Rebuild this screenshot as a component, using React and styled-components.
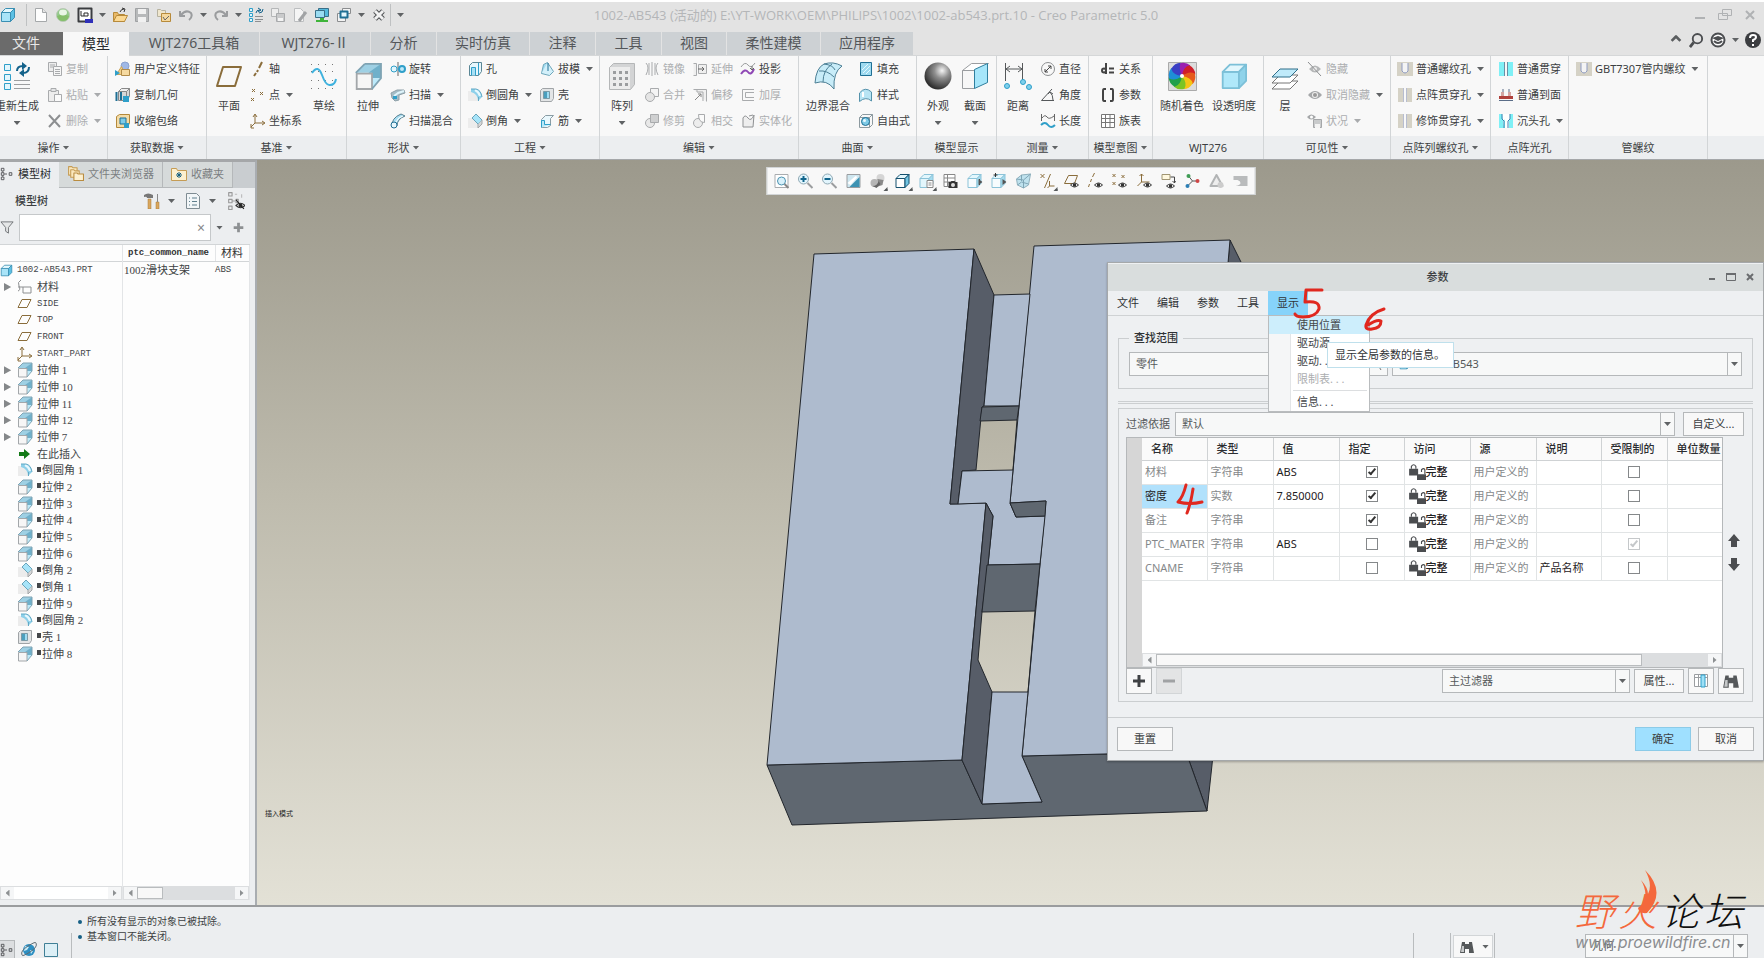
import React from 'react';
import styled, { createGlobalStyle } from 'styled-components';

const Global = createGlobalStyle`
  *, *::before, *::after { box-sizing: border-box; }
  body { margin: 0; font-family: "Noto Sans", "Noto Sans CJK SC", sans-serif; font-size: 11px; line-height: 16px; color: #3c3f42; background: #e3e3e3; }
  button, input, select { font: inherit; color: inherit; margin: 0; border-radius: 0; }
  button { background: none; border: 0; padding: 0; white-space: nowrap; }
  svg { display: block; flex: none; }
`;

/* ---------- icons ---------- */
const B = '#2f9fc9', L = '#bfe8f7', D = '#1f6f94', G = '#a9abad', LG = '#e4e5e6', T = '#8a6d3b', K = '#4a4c4f';

const cube = (s = '#3a8fb3', f = '#a9e4f8', f2 = '#5cc0e4') => (
  <g stroke={s} strokeLinejoin="round"><path d="M1.5 5.5h9v9h-9z" fill={f} /><path d="M1.5 5.5l4-4h9l-4 4z" fill="#e3f7fd" /><path d="M10.5 5.5l4-4v9l-4 4z" fill={f2} /></g>
);
const extrude = (
  <g>
    <path d="M1 6l5-5v5z" fill="#eef2f4" /><path d="M1 6l5-5h9l-5 5z" fill="#9ed0e4" /><path d="M8 6l7-5v8l-5 0V6z" fill="#6fb0ca" />
    <path d="M10 15l5-6h-5z" fill="#bdeafa" /><path d="M1.5 6.5H10V15H1.5z" fill="#f6f6f6" stroke="#a3a7aa" /><path d="M1 6l5-5M10 15l5-6V1H6" fill="none" stroke="#7fa3b3" />
  </g>
);
const eye = (x, y, c = '#333') => (
  <g transform={`translate(${x} ${y})`}><path d="M0 3Q4 -1 8 3Q4 7 0 3z" fill="#fff" stroke={c} /><circle cx="4" cy="3" r="1.800" fill={c} /></g>
);
const stroke = (d, c = K, w = 1, f = 'none') => <path d={d} stroke={c} strokeWidth={w} fill={f} strokeLinejoin="round" />;

const ICONS = {
  cube: cube(),
  page: <g>{stroke('M2.500 1.500h7l4 4v9h-11z', '#a5a8aa', 1, '#fdfdfd')}{stroke('M9.500 1.500v4h4', '#a5a8aa', 1, '#e6e6e6')}</g>,
  ball: <g><circle cx="8" cy="8" r="6.500" fill="#93c98a" stroke="#b9c9b6" /><path d="M2 9q6-3 12 0-1 5-6 5t-6-5z" fill="#86bf6c" /><ellipse cx="8" cy="5.500" rx="4" ry="3" fill="#e9f6e6" /></g>,
  session: <g>{stroke('M1.500 1.500h13v13h-13z', '#3b3d40', 2, '#fff')}{stroke('M4 4v5h7V6H7v3', '#2b2b2b', 1)}<path d="M8 12h8v4H8z" fill="#2f2fb8" /></g>,
  folder: <g>{stroke('M1.500 14.500v-9h4l1 2h6v7z', '#b78a3a', 1, '#e9b968')}{stroke('M1.500 14.500l3-6h11l-3 6z', '#b78a3a', 1, '#fbd892')}{stroke('M8 5q1-3 4-3M10 1l3 1-1 3', '#333', 1)}</g>,
  save: <g>{stroke('M1.500 1.500h13v13h-13z', '#a0a2a4', 1, '#b7b9ba')}<path d="M4 2h8v5H4zM4 10h8v5H4z" fill="#f1f1f1" /></g>,
  copyFolder: <g>{stroke('M1.500 9.500v-7h3l1 1h4v6z', '#b7b29f', 1, '#efe6cd')}{stroke('M5.500 14.500v-8h9v8z', '#b78a3a', 1, '#f4d79d')}{stroke('M7 10l2 3 4-4', '#666', 1)}</g>,
  undo: stroke('M2 4v5h5M3 8q5-6 10-2q2 4-2 7', '#9a9c9e', 2),
  redo: stroke('M14 4v5H9M13 8Q8 2 3 6q-2 4 2 7', '#9a9c9e', 2),
  regen: <g>{stroke('M1.500 1.500h3v3h-3zM1.500 6.500h3v3h-3zM1.500 11.500h3v3h-3z', B, 1, '#e2f6fd')}{stroke('M8 6q0-3 4-3M10 1l3 2-3 2M15 2q0 4-4 4', '#14628a', 1)}{stroke('M7 9.500h8M7 12.500h8M7 14.500h6', '#8d8f91', 1)}</g>,
  saveCopy: <g>{stroke('M1.500 1.500h7v8h-7z', '#b5b7b8', 1, '#ededed')}{stroke('M6.500 6.500h8v8h-8z', '#a8aaac', 1, '#c9cacb')}<path d="M8 11h5v3H8z" fill="#f4f4f4" /></g>,
  sheetEdit: <g>{stroke('M2.500 1.500h6l3 3v10h-9z', '#bcbec0', 1, '#f5f5f5')}{stroke('M14 5l-7 9', '#a1a3a5', 3)}</g>,
  monitor: <g>{stroke('M4.500 1.500h10v8h-10z', '#3a6f88', 1, '#55b9dc')}{stroke('M1.500 3.500h9v7h-9z', '#3a6f88', 1, '#9adcf2')}<path d="M6 11h4v2h4v2H2v-2h4z" fill="#3fb43a" /></g>,
  windows: <g>{stroke('M1.500 6.500h8v8h-8z', '#8b8d8f', 1, '#f3f3f3')}{stroke('M6.500 1.500h8v5h-8z', '#8b8d8f', 1, '#f3f3f3')}{stroke('M4.500 4.500h7v6h-7z', D, 2, '#e4f6fd')}</g>,
  closeDoc: <g>{stroke('M4 4l8 8M12 4l-8 8', '#4f5154', 5)}{stroke('M4 4l8 8M12 4l-8 8', '#f2f2f2', 3)}</g>,
  copy: <g>{stroke('M1.500 1.500h8v9h-8z', G, 1, '#ededed')}{stroke('M6.500 5.500h8v9h-8z', G, 1, '#f6f6f6')}{stroke('M3 4h5M3 6h3M8 8.500h5M8 10.500h5M8 12.500h5', G)}</g>,
  paste: <g>{stroke('M1.500 3.500h10v11h-10z', G, 1, '#ededed')}{stroke('M4 1.500h5v3H4z', G, 1, LG)}{stroke('M7.500 7.500h7v7h-7z', G, 1, '#fafafa')}</g>,
  del: stroke('M2 2l11 12M13 2L2 14', '#8d8f91', 2),
  udf: <g><circle cx="10" cy="5" r="4" fill="#9fb8e6" stroke="#8ba2d0" />{stroke('M1.500 13.500l5-8 4 8z', '#c9a257', 1, '#f3cf88')}{stroke('M6.500 8.500h8v6h-8z', '#b18b49', 1, '#f5d9a0')}<path d="M0 9l5 3-5 3z" fill={B} /></g>,
  copyGeom: <g>{stroke('M3.500 4.500l3-3h8l-3 3z', '#888', 1, '#f0f0f0')}{stroke('M3.500 4.500h8v9h-8zM11.500 4.500l3-3v8l-3 4', '#888', 1, '#d7d7d7')}<path d="M8 9h6v6H8z" fill={B} />{stroke('M1.500 5v9M6 5v8', D, 2)}</g>,
  shrink: <g>{stroke('M1.500 3.500l3-2h10v9l-3 4h-10z', '#b5893a', 1, '#f3dca8')}{stroke('M5 5h6v6H5z', D, 1, '#7dcbe8')}<path d="M9 10h5v5H9z" fill={B} /></g>,
  axis: stroke('M12 1L9 7M8 9l-1 2M6 12l-2 3', T, 2),
  points: stroke('M2 2l3 3M5 2L2 5M10 5l3 3M13 5l-3 3M1 11l3 3M4 11l-3 3', T, 1),
  csys: <g>{stroke('M5 2v8h9M5 10l-4 4', T, 1)}{stroke('M3 4l2-3 2 3M12 8l3 2-3 2M1 11v4h3', T, 1)}</g>,
  revolve: <g>{stroke('M8 1v14', '#666')}<circle cx="4" cy="8" r="3" fill="#e2f5fc" stroke={B} /><circle cx="12" cy="8" r="3" fill={L} stroke={B} strokeWidth="2" /></g>,
  sweep: <g><path d="M1 6l6-3h7l1 3-6 2v5l-4 1-3-3z" fill="#a4bcc6" stroke="#8fa0a8" />{stroke('M4 9l4-3 6-2', '#dff4fb', 2)}<path d="M3 9h4v3H3z" fill={B} /></g>,
  sweepBlend: <g><path d="M2 14Q1 5 11 1l4 2Q7 6 7 13z" fill="#a9def2" stroke="#567f90" /><circle cx="4" cy="12" r="3" fill="#e7f6fc" stroke={D} />{stroke('M6 9Q8 4 13 3', '#fff', 1)}</g>,
  hole: <g>{stroke('M2.500 4.500l3-3h9v9l-3 4h-9z', '#5b8796', 1, '#e7f6fc')}{stroke('M4.500 14.500V6.500h4v8M11.500 2v12', B, 1, '#a9e0f4')}</g>,
  round: <g><path d="M1 4h7l4 5v5H1z" fill="#ececec" /><path d="M4 2h5q5 1 6 8l-4 4q0-7-7-9z" fill="#8dd0ea" /><path d="M8 3q4 2 5 6" stroke="#e7f8fe" strokeWidth="2" fill="none" />{stroke('M11.500 14v-4M4 2h5q5 1 6 8', '#62a9c5')}</g>,
  chamfer: <g><path d="M1 5h6l5 5v5H1z" fill="#ececec" /><path d="M5 5l4-4 6 6-4 4z" fill="#a7e4f9" stroke="#6aa5bb" />{stroke('M11 11v4l4-4V7', '#a3a6a8', 1, '#d5d7d8')}</g>,
  draft: <g>{stroke('M2.500 12.500L4.500 3.500l4-2v11z', '#6fa7bb', 1, '#a3ddf2')}{stroke('M8.500 1.500l6 9-4 4-8-2', '#6fa7bb', 1, '#d3f0fa')}{stroke('M9 2v8', D)}</g>,
  shell: <g>{stroke('M1.500 3.500l2-2h11v10l-2 3h-11z', '#a0a4a7', 1, '#e3e5e6')}{stroke('M4.500 4.500h6v7h-6z', '#7b9aa6', 1, '#4c9fbd')}<path d="M8 5h2v6H8z" fill="#9fdcf2" /></g>,
  rib: <g>{stroke('M2.500 6.500l4-4h8l-3 3v7l-3 2h-6z', '#8a9ca4', 1, '#e9f7fc')}{stroke('M2.500 14.500V7.500h3v4h6', B, 1, '#b8e8f8')}</g>,
  mirror: stroke('M8 1v14M2 2q4 4 0 12M5 2v12M14 2q-4 4 0 12M11 2v12', G),
  extend: <g>{stroke('M1.500 2.500h3v12h-3M6.500 3.500h8v9h-8z', G, 1, '#efefef')}{stroke('M6 8h6M10 6l2 2-2 2', '#666')}</g>,
  project: <g>{stroke('M1 6q4-6 7-2t7-2', '#9a9c9e', 1)}{stroke('M1 13q4-6 7-2t6-3', '#8f48b5', 2)}{stroke('M12 5v4M10 7l2 2 2-2', '#666')}</g>,
  merge: <g>{stroke('M6.500 1.500h8v8h-8z', G, 1, '#f4f4f4')}<circle cx="6" cy="10" r="4.500" fill="#e5e5e5" stroke={G} /></g>,
  offset: <g>{stroke('M1.500 2.500h13v12M5 2v3h6v9', G, 1, '#efefef')}{stroke('M3 13l6-6M6 7h3v3', '#888', 1)}</g>,
  thicken: stroke('M14 2.500H2.500v11H14M14 5.500H5.500v5H14', G),
  trim: <g><circle cx="6" cy="10" r="4.500" fill="#e8e8e8" stroke={G} />{stroke('M6.500 1.500h8v8h-8z', G, 1, '#cfd0d1')}</g>,
  intersect: <g><circle cx="6" cy="10" r="4.500" fill="#ededed" stroke={G} />{stroke('M6.500 1.500h6v8q-6 0-6-8z', G, 1, '#fafafa')}</g>,
  solidify: stroke('M3 14V5q2-4 5 0t6-3l-1 12H3M13 2l-4 1', '#8f9193', 1, '#eee'),
  fill: <g>{stroke('M2.500 1.500h11v13h-11z', D, 1, '#9edaf0')}{stroke('M4 9l6-6M5 12l7-7M8 13l4-4', '#e5f8ff')}</g>,
  style: <g>{stroke('M1.500 14.500V6Q7-1 13.500 5v9Q8 9 1.500 14.500z', '#5592ab', 1, '#b7e4f4')}{stroke('M5 5v5', '#fff', 2)}</g>,
  freestyle: <g>{stroke('M1.500 4.500l3-3h10v10l-3 3h-10zM1.500 4.500h10v10M11.500 4.500l3-3', '#8d9aa0', 1)}<circle cx="7.500" cy="8.500" r="4" fill="#7fcbe7" stroke={D} /><circle cx="6.500" cy="7.500" r="1.500" fill="#e9f9ff" /></g>,
  diameter: <g><circle cx="8" cy="8" r="6.500" fill="none" stroke="#8e9092" />{stroke('M5 11l6-6M8 5h3v3M5 8v3h3', '#444')}</g>,
  angle: stroke('M14 13.500H1.500L12 2M10 5q3 3 3 8M8 7l2-2 3 2', '#55585a'),
  length: <g>{stroke('M1.500 1v7M14.500 1v7M2 5q3-4 5-1t7-1', '#666')}{stroke('M1 12q4-4 7 0t7 0', B, 2)}</g>,
  relation: <g>{stroke('M6 2v11M6 9.500a2 2 0 1 0-4 0a2 2 0 1 0 4 0', '#444', 2)}{stroke('M9 7.500h5M9 11.500h5', '#444', 2)}</g>,
  param: stroke('M6 2H4q-1 0-1 2v8q0 2 1 2h2M10 2h2q1 0 1 2v8q0 2-1 2h-2', '#444', 2),
  family: <g>{stroke('M1.500 1.500h13v13h-13zM1.500 5.500h13M1.500 9.500h13M5.500 1.500v13M10 1.500v13', '#777', 1, '#fff')}</g>,
  hide: <g><path d="M2 8q6-7 12 0q-6 7-12 0z" fill="#b5b7b8" /><circle cx="8" cy="8" r="2" fill="#eee" />{stroke('M1 1l13 14', '#8c8e90')}</g>,
  unhide: <g><path d="M1 8q7-8 14 0q-7 8-14 0z" fill="#a5a7a9" /><circle cx="8" cy="8" r="3" fill="#eee" /><circle cx="8" cy="8" r="2" fill="#999" /></g>,
  status: <g><path d="M0 4q4-5 9 0q-5 5-9 0z" fill="#a5a7a9" /><circle cx="4.500" cy="4" r="1.500" fill="#fff" />{stroke('M6.500 6.500h8v8h-8z', '#a5a7a9', 1, '#c9cbcc')}<path d="M8 11h5v4H8z" fill="#f4f4f4" /></g>,
  uhole: <g><path d="M0 1h16v14H0z" fill="#d5d2c6" />{stroke('M5 2v8q3 4 6 0V2', '#8f9bc0', 1, '#f4f4f4')}</g>,
  through: <g><path d="M1 1h5v14H1zM10 1h5v14h-5z" fill="#d5d2c6" />{stroke('M6.500 1v14M9.500 1v14', '#b7bdd0')}</g>,
  cyanThrough: <g><path d="M1 1h5v14H1zM10 1h5v14h-5z" fill="#7ff0f6" />{stroke('M6.500 1v14M9.500 1v14', '#6a8fa5')}</g>,
  toFace: <g><path d="M1 9h14v3H1z" fill="#b0413c" />{stroke('M5 2v7M11 2v7M1 13.500h14', '#5a6d88')}<path d="M3 5h3v4H3zM10 5h3v4h-3z" fill="#d3a6a3" /></g>,
  sink: <g><path d="M1 1h14v14H1z" fill="#7ff0f6" /><path d="M4 1h3v5l-1 2v7M9 1h3v5l-1 2v7H9z" fill="#fff" />{stroke('M4 1v5l2 2v7M12 1v5l-2 2v7', '#3c7fae')}<path d="M7 1h2v14H7z" fill="#fff" /></g>,
  modelTree: stroke('M1.500 1.500h3v3h-3zM1.500 6.500h3v3h-3zM1.500 11.500h3v3h-3zM5 8h3M10.500 6.500h3v3h-3zM3 5v1M3 10v1', '#4b4d50'),
  folders: <g>{stroke('M1.500 9.500v-8h3l1 1h4v7z', '#c59c55', 1, '#fbe8bd')}{stroke('M3.500 11.500v-7h3l1 1h4v6z', '#c59c55', 1, '#fbe8bd')}{stroke('M6.500 14.500v-7h3l1 1h5v6z', '#b98c40', 1, '#fdf0cf')}</g>,
  fav: <g>{stroke('M.500 14.500v-12h5l1 2h9v10z', '#c59c55', 1, '#fdf0cf')}{stroke('M8 6v6M5 9h6M6 7l4 4M10 7l-4 4', '#155e80')}</g>,
  tools: <g><path d="M4 6h3v10H4zM12 9h3v7h-3z" fill="#d9a75e" stroke="#a87b3a" strokeWidth=".500" /><path d="M0 2q4-3 9 0v3H3q0-2-3-1z" fill="#777" />{stroke('M13.500 1v8', '#888', 1)}</g>,
  listDoc: <g>{stroke('M1.500.500h10l3 3v12h-13z', '#7f8c93', 1, '#f2f6f8')}{stroke('M4 5h1M4 8.500h1M4 12h1M7 5h5M7 8.500h5M7 12h5', '#5f7f8d')}</g>,
  treeHide: <g>{stroke('M1.500.500h3v3h-3zM1.500 6.500h3v3h-3zM1.500 12.500h3v3h-3zM5 8h2M8 6.500h2v3H8z', '#999')}{stroke('M13 2v3M7 2h2', '#bbb')}{eye(8, 9)}{stroke('M8 7l7 8', '#222')}</g>,
  filter: stroke('M1 2h13L9 8v6l-3-2V8z', '#707376', 1, '#e5e7e8'),
  material: stroke('M4 1q-4 2-2 6t-1 5M1 8l5 0v6h8V8H6', '#8d8f91'),
  plane: stroke('M5 3.500h9l-4 8H1z', T),
  insert: <path d="M2 6h5V3l6 5-6 5v-3H2z" fill="#137a17" />,
  extrude,
  fit: <g>{stroke('M1.500 1.500h13v13h-13z', '#a9acaf', 1, '#fff')}<circle cx="8" cy="8" r="4" fill="#d8f1fb" stroke="#4d93b0" />{stroke('M11 11l4 4', '#888', 2)}</g>,
  zoomIn: <g><circle cx="6" cy="6" r="5" fill="#e2f5fd" stroke="#8fa8b3" />{stroke('M3 6h6M6 3v6', '#11658c', 2)}{stroke('M10 10l5 5', '#9b9d9f', 2)}</g>,
  zoomOut: <g><circle cx="6" cy="6" r="5" fill="#e2f5fd" stroke="#8fa8b3" />{stroke('M3 6h6', '#11658c', 2)}{stroke('M10 10l5 5', '#9b9d9f', 2)}</g>,
  repaint: <g>{stroke('M1.500 1.500h13v13h-13z', '#9a9da0', 1, '#cfe7f0')}<path d="M4 14L14 4v10z" fill="#3d93b3" /><path d="M2 10l8-7 2 1-7 8z" fill="#fff" /></g>,
  shade: <g><circle cx="11" cy="5" r="4" fill="#d5d5d5" /><path d="M8 6l6 1-1 5-6 2z" fill="#8a8a8a" /><circle cx="5" cy="10" r="4" fill="#b5b5b5" /><path d="M3 13q5 0 6-5l2 3-4 4z" fill="#666" /></g>,
  cubeDark: cube('#14506e', '#fff', '#73c5e3'),
  cubeList: <g>{cube('#8cc3d8', '#e3f6fc', '#a5dcef')}{stroke('M8.500 7.500h6v7h-6zM10 10h3M10 12h3', '#888', 1, '#fff')}</g>,
  camera: <g>{stroke('M1.500 1.500h11v12h-11zM1.500 5h11M1.500 9h11M5 1.500v12', '#888', 1, '#fff')}<path d="M6 9h2l1-1h3l1 1h2v6H6z" fill="#333" /><circle cx="10.500" cy="12" r="2" fill="#ddd" /></g>,
  section: <g>{cube('#8cc3d8', '#f7fcfe', '#a5dcef')}{stroke('M13 6v6', '#444', 1)}<path d="M12 6l4 3-4 3z" fill="#555" /></g>,
  explode: <g>{cube('#8cc3d8', '#f7fcfe', '#a5dcef')}{stroke('M5 0v4M3 2h4', '#333')}<path d="M12 6l4 3-4 3z" fill="#555" /></g>,
  persp: <g>{stroke('M1 6l5-4 9-1-2 11-5 3-6-3z', '#8fb0bd', 1, '#bfe2ee')}{stroke('M1 6l7 1 7-6M8 7v8M6 2v6M2 12l4-3 7 2', '#7fa6b6')}</g>,
  datumAll: stroke('M1 1l4 4M5 1L1 5M11 1L5 15M10 8v5h5M10 13l-2 2', T),
  planeEye: <g>{stroke('M5 2.500h9l-3 8H1z', T)}{eye(7, 9)}</g>,
  axisEye: <g>{stroke('M7 0L5 4M4 6L3 9M2 11l-1 3', T)}{eye(7, 9)}</g>,
  ptsEye: <g>{stroke('M1 1l3 3M4 1L1 4M10 2l3 3M13 2l-3 3M1 9l3 3M4 9l-3 3', T)}{eye(7, 9)}</g>,
  csysEye: <g>{stroke('M5 1v8h8M5 9l-4 4M3 3l2-2 2 2', T)}{eye(7, 9)}</g>,
  annoEye: <g>{stroke('M1.500 1.500h8v5h-8z', '#a09573', 1, '#fff8df')}{stroke('M10 4h4v6M12 8l2 2 1-2', '#444')}{eye(6, 10)}</g>,
  spin: <g>{stroke('M8 8L4 3M8 8H14M8 8l-5 5', '#555')}<circle cx="4" cy="3" r="2" fill="#3f9d55" /><circle cx="13" cy="8" r="2" fill="#cf4646" /><circle cx="3" cy="13" r="2" fill="#2d7fb5" /></g>,
  tri: <g>{stroke('M8 2L2 13h12z', '#b2b4b5', 2, '#ededed')}<circle cx="12" cy="12" r="3" fill="#ccc" /></g>,
  flag: <path d="M1 3h14v10H3q5-1 5-3t-3-3H1z" fill="#b9bbbc" />,
  globe: <g><circle cx="8" cy="8" r="6" fill="#2d8fc2" /><path d="M4 4l4 1-2 3-3 1zM9 8l3 1-2 3z" fill="#c7ecfa" />{stroke('M1 13Q-1 9 7 4t8-3q2 4-6 9t-8 3', '#5f6c74')}</g>,
  square: stroke('M1.500 1.500h13v13h-13z', '#3f7f96', 1, '#dceff6'),
  binoc: <g><path d="M3 3h3v2h4V3h3l2 11h-5v-4H6v4H1z" fill="#55585a" /><path d="M3 7h2v6H2z" fill="#c7c9ca" /></g>,
  colTable: <g>{stroke('M1.500 1.500h13v12h-13zM1.500 4.500h13M5.500 1.500v12M10.500 1.500v12', '#9a9da0', 1, '#fff')}<path d="M8 2h4v12H8z" fill="#9fe0f6" stroke={B} /></g>,
  plus: stroke('M8 2v12M2 8h12', '#3f4144', 3),
  plusDim: stroke('M8 1v14M1 8h14', '#8d9092', 4),
  minus: stroke('M2 8h12', '#a0a2a4', 3),
  up: <path d="M8 1l6 7h-3v6H5V8H2z" fill="#4b4d50" />,
  down: <path d="M8 15l6-7h-3V2H5v6H2z" fill="#4b4d50" />,
  search: <g><circle cx="9" cy="6" r="5" fill="none" stroke="#4b4d50" strokeWidth="2" />{stroke('M5 10l-4 5', '#4b4d50', 3)}</g>,
  learn: <g><circle cx="8" cy="8" r="6.500" fill="#fff" stroke="#4b4d50" strokeWidth="2" /><path d="M2 6l6-2 6 2-6 3z" fill="#4b4d50" />{stroke('M4 9q4 4 8 0', '#4b4d50', 2)}</g>,
  help: <g><circle cx="8" cy="8" r="8" fill="#3b3d40" />{stroke('M5 6q0-3 3-3t3 2q0 2-3 3v2M8 12v2', '#fff', 2)}</g>,
  collapse: stroke('M3 9l5-5 5 5', '#5b5e60', 3),
  winMin: stroke('M3 11h10', '#b0b2b4', 2),
  winRestore: stroke('M5.500 2.500h9v6h-9zM1.500 6.500h9v6h-9z', '#b0b2b4', 1, '#e3e3e3'),
  winClose: stroke('M4 4l8 8M12 4l-8 8', '#b0b2b4', 2),
  dlgMin: stroke('M5 10h6', '#6a6c6f', 2),
  dlgMax: <g>{stroke('M3.500 4.500h9v7h-9z', '#6a6c6f')}{stroke('M3 5h10', '#6a6c6f', 2)}</g>,
  dlgClose: stroke('M5 5l6 6M11 5l-6 6', '#6a6c6f', 2),
  picker: stroke('M4 1v11l3-3 3 5M4 1l8 8H7', '#777'),
  locks: <g><path d="M1 5h8v6H1zM8 10h8v5H8z" fill="#4b4d50" />{stroke('M3 5V3q2-3 4 0v2', '#4b4d50', 1)}{stroke('M12 8V6q2-2 3 0v4', '#4b4d50', 1)}</g>,
};

const Icon = ({ n, s = 16 }) => <svg width={s} height={s} viewBox="0 0 16 16" aria-hidden="true">{ICONS[n]}</svg>;

const petals = ['#9a1fb0', '#d01f2a', '#e65a1c', '#f5c515', '#7cc423', '#1fa04a', '#1e8fd6', '#3a3fc4'];
const BIG = {
  regen: <g><g stroke={B} fill="#e2f6fd"><path d="M1.500 2.500h6v6h-6zM1.500 12.500h6v6h-6zM1.500 21.500h6v6h-6z" /></g>{stroke('M14 9q0-5 6-5M26 5q0 6-6 6', '#14628a', 2)}<path d="M19 0l5 4-5 4zM21 7l-5 4 5 4z" fill="#14628a" />{stroke('M11 18.500h16M11 22.500h16M11 26.500h16', '#9c9ea0')}</g>,
  plane: stroke('M8 5h18l-6 19H2z', T, 2),
  sketch: <g><path d="M1 2.500h26M1 9.500h26M1 18.500h26M1 26.500h26" stroke="#777" strokeDasharray="1 6" />{stroke('M2 11q6-9 10 2t8 10q5 0 6-6', '#3fb2de', 2)}</g>,
  extrude: <g transform="scale(1.800)">{extrude}</g>,
  pattern: <g>{stroke('M1.500 5.500l4-4h21v21l-4 5h-21z', '#b5b7b8', 1, '#d3d4d5')}<path d="M2 5h20v22H2z" fill="#ececec" /><path d="M5 9h3v3H5zM11 9h3v3h-3zM17 9h3v3h-3zM5 15h3v3H5zM11 15h3v3h-3zM17 15h3v3h-3zM5 21h3v3H5zM11 21h3v3h-3zM17 21h3v3h-3z" fill="#9b9d9f" /></g>,
  blend: <g>{stroke('M1 21Q2 6 10 2q9-3 18 2-9 6-8 23Q13 17 1 21z', '#4c7f95', 1, '#c8ecf8')}{stroke('M10 2q9 1 11 6M5 9q8-1 15 6M9 20Q9 8 18 2', '#4c7f95')}</g>,
  sphere: <circle cx="14" cy="14" r="13.500" fill="url(#ball)" />,
  cut: <g>{stroke('M1.500 8.500l9-7h17l-13 7z', '#9a9da0', 1, '#fff')}{stroke('M1.500 8.500h12v18h-12z', '#9a9da0', 1, '#f7f7f7')}{stroke('M13.500 26.500v-19l13-6v19z', '#2f7f9e', 1, '#a6e6fa')}</g>,
  distance: <g>{stroke('M1.500 1v18M18.500 1v18M2 7h16M6 4L2 7l4 3M14 4l4 3-4 3', '#55585a')}<g fill="#7fd0ec" stroke={B}><circle cx="3" cy="24" r="2.500" /><circle cx="19" cy="20" r="2.500" /><circle cx="25" cy="25" r="2.500" /></g></g>,
  color: <g><path d="M.5.5h28v28H.5z" fill="#dcdddd" stroke="#aaa" />{petals.map((c, i) => <path key={c} d="M14 14Q7 8 9 2Q15 -1 20 2Q15 6 14 14z" fill={c} transform={`rotate(${i * 45 + 12} 14 14)`} />)}<circle cx="14" cy="14" r="2" fill="#fff" /></g>,
  clear: <g transform="scale(1.800)">{cube('#7cc0d8', '#b0e8fa', '#8fd3ea')}</g>,
  layers: <g>{stroke('M1 27l8-8h18l-8 8z', '#777', 1, '#fff')}{stroke('M1 21l8-8h18l-8 8z', '#777', 1, '#fff')}{stroke('M1 15l8-8h18l-8 8z', '#2f6f8a', 1, '#bfeafa')}</g>,
};
const BigIcon = ({ n }) => <svg width="29" height="29" viewBox="0 0 29 29" aria-hidden="true">{BIG[n]}</svg>;

const Arrow = styled.span`
  flex: none; width: 7px; height: 4px; background: ${p => (p.$dim ? '#a9abad' : '#606365')}; clip-path: polygon(0 0, 100% 0, 50% 100%);
`;

/* ---------- shell ---------- */
const Shell = styled.div`position: relative; display: flex; flex-direction: column; min-height: 100vh; overflow: hidden;`;

const TitleBar = styled.header`
  display: grid; grid-template-columns: 1fr auto 1fr; align-items: center; height: 32px;
  padding: 0 6px 4px 0; border-top: 2px solid #fff; background: #e3e3e3;
`;
const QuickBar = styled.div`display: flex; align-items: center;`;
const QuickButton = styled.button`display: grid; place-items: center; width: ${p => (p.$arrow ? 13 : p.$app ? 16 : 22)}px; height: 22px;`;
const QuickRule = styled.span`width: 1px; height: 22px; margin: 0 3px 0 ${p => (p.$first ? 10 : 0)}px; background: #bfc1c2;`;
const WindowTitle = styled.h1`margin: 0 6px 0 0; font: 400 13px/20px "Open Sans", "Noto Sans CJK SC", sans-serif; color: #b4b6b8; white-space: nowrap;`;
const WindowButtons = styled.div`display: flex; justify-content: flex-end; gap: 9px;`;

const TabBar = styled.nav`display: flex; height: 24px; background: #e3e3e3; border-bottom: 1px solid #d5d7d8;`;
const Tab = styled.button`
  width: ${p => p.$w}px; margin-right: ${p => (p.$kind ? 0 : 1)}px; padding: 0 ${p => (p.$kind === 'file' ? 11 : 0)}px 1px 0; font-size: 14px; line-height: 22px;
  color: ${p => (p.$kind === 'file' ? '#e8e8e8' : p.$kind === 'on' ? '#2b2d30' : '#54575a')};
  background: ${p => (p.$kind === 'file' ? '#6b6b6b' : p.$kind === 'on' ? '#f8f8f8' : '#cdd1d4')};
  ${p => p.$kind === 'on' && 'height: 24px;'}
`;
const TabTools = styled.div`display: flex; align-items: center; gap: 6px; margin-left: auto; padding: 0 3px 8px 0; height: 24px;`;

const Ribbon = styled.div`display: flex; height: 104px; background: #f8f8f8; border-bottom: 1px solid #a5a7a9; overflow: hidden;`;
const Group = styled.section`flex: none; display: flex; flex-direction: column; width: ${p => p.$w}px; border-right: 1px solid #d2d5d7;`;
const GroupBody = styled.div`flex: 1; display: flex;`;
const GroupLabel = styled.footer`display: flex; align-items: center; justify-content: center; gap: 3px; height: 23px; background: #eceef0; white-space: nowrap;`;
const LabelFill = styled.div`flex: 1; background: linear-gradient(#f8f8f8 80px, #eceef0 80px);`;
const BigButton = styled.button`
  flex: none; display: flex; flex-direction: column; align-items: center; width: ${p => p.$w}px; margin-left: ${p => p.$ml}px; padding-top: 6px;
  & > span:nth-of-type(1) { margin: 7px 0; }
`;
const Column = styled.div`flex: none; width: ${p => p.$w}px; margin-left: ${p => p.$ml}px;`;
const Command = styled.button`
  display: flex; align-items: center; gap: 3px; height: 26px; color: ${p => (p.$dim ? '#acaeb0' : '#3c3f42')};
  ${Arrow} { margin-left: 3px; }
`;

const big = (icon, text, w, ml = 0, arrow) => ({ big: icon, text, w, ml, arrow });
const col = (w, ml, ...items) => ({ w, ml, items });
/* command: [icon, text, flags] where d = unavailable, a = has a drop-down, s = the arrow stays available */
const GROUPS = [
  { w: 108, label: '操作', arrow: 1, cols: [big('regen', '重新生成', 44, -5, 1), col(60, 8, ['copy', '复制', 'd'], ['paste', '粘贴', 'da'], ['del', '删除', 'da'])] },
  { w: 99, label: '获取数据', arrow: 1, cols: [col(90, 7, ['udf', '用户定义特征', ''], ['copyGeom', '复制几何', ''], ['shrink', '收缩包络', ''])] },
  { w: 140, label: '基准', arrow: 1, cols: [big('plane', '平面', 36, 4), col(56, 3, ['axis', '轴', ''], ['points', '点', 'a'], ['csys', '坐标系', '']), big('sketch', '草绘', 36)] },
  { w: 114, label: '形状', arrow: 1, cols: [big('extrude', '拉伸', 36, 3), col(70, 4, ['revolve', '旋转', ''], ['sweep', '扫描', 'a'], ['sweepBlend', '扫描混合', ''])] },
  { w: 139, label: '工程', arrow: 1, cols: [col(72, 6, ['hole', '孔', ''], ['round', '倒圆角', 'a'], ['chamfer', '倒角', 'a']), col(60, 0, ['draft', '拔模', 'a'], ['shell', '壳', ''], ['rib', '筋', 'a'])] },
  { w: 199, label: '编辑', arrow: 1, cols: [big('pattern', '阵列', 36, 4, 1), col(48, 4, ['mirror', '镜像', 'd'], ['merge', '合并', 'd'], ['trim', '修剪', 'd']), col(48, 0, ['extend', '延伸', 'd'], ['offset', '偏移', 'd'], ['intersect', '相交', 'd']), col(58, 0, ['project', '投影', ''], ['thicken', '加厚', 'd'], ['solidify', '实体化', 'd'])] },
  { w: 118, label: '曲面', arrow: 1, cols: [big('blend', '边界混合', 48, 5), col(60, 6, ['fill', '填充', ''], ['style', '样式', ''], ['freestyle', '自由式', ''])] },
  { w: 80, label: '模型显示', cols: [big('sphere', '外观', 36, 3, 1), big('cut', '截面', 36, 1, 1)] },
  { w: 92, label: '测量', arrow: 1, cols: [big('distance', '距离', 36, 3), col(50, 4, ['diameter', '直径', ''], ['angle', '角度', ''], ['length', '长度', ''])] },
  { w: 64, label: '模型意图', arrow: 1, cols: [col(50, 11, ['relation', '关系', ''], ['param', '参数', ''], ['family', '族表', ''])] },
  { w: 111, label: 'WJT276', cols: [big('color', '随机着色', 48, 5), big('clear', '设透明度', 48, 4)] },
  { w: 127, label: '可见性', arrow: 1, cols: [big('layers', '层', 36, 3), col(80, 4, ['hide', '隐藏', 'd'], ['unhide', '取消隐藏', 'das'], ['status', '状况', 'da'])] },
  { w: 100, label: '点阵列螺纹孔', arrow: 1, cols: [col(92, 6, ['uhole', '普通螺纹孔', 'a'], ['through', '点阵贯穿孔', 'a'], ['through', '修饰贯穿孔', 'a'])] },
  { w: 78, label: '点阵光孔', cols: [col(68, 7, ['cyanThrough', '普通贯穿', ''], ['toFace', '普通到面', ''], ['sink', '沉头孔', 'a'])] },
  { w: 139, label: '管螺纹', cols: [col(130, 7, ['uhole', 'GBT7307管内螺纹', 'a'])] },
];

const Main = styled.main`flex: 1; display: flex; min-height: 745px;`;

/* ---------- model tree ---------- */
const Side = styled.aside`
  flex: none; display: flex; flex-direction: column; width: 257px; padding-bottom: 5px; background: #eceef0;
  border-top: 2px solid #a5a7a9; border-right: 2px solid #a9adb1;
`;
const SideTabs = styled.div`display: flex; height: 26px; background: #c9cdd0;`;
const SideTab = styled.button`
  display: flex; align-items: center; gap: 4px; width: ${p => p.$w}px; padding: 0 0 2px ${p => p.$pl}px;
  color: ${p => (p.$on ? '#2b2d30' : '#7b7e81')}; background: ${p => (p.$on ? '#eceef0' : '#d6dada')};
  border: solid #b5b8ba; border-width: ${p => (p.$on ? '0' : '0 1px 1px 0')};
`;
const SideHead = styled.div`display: flex; align-items: center; height: 26px; padding: 0 10px 0 15px; h2 { flex: 1; margin: 0; font-size: 11px; font-weight: 500; } svg { margin: 0 8px 0 10px; } svg:last-child { margin: 0 0 0 11px; }`;
const SearchRow = styled.div`display: flex; align-items: center; height: 27px; padding-right: 11px; ${Arrow} { margin: 0 10px 0 5px; }`;
const SearchBox = styled.div`
  flex: 1; display: flex; align-items: center; height: 27px; margin-left: 4px; background: #fff; border: 1px solid #c5c8ca;
  input { flex: 1; min-width: 0; border: 0; background: none; outline: 0; } button { width: 18px; color: #85888a; font-size: 14px; }
`;
const TreeFrame = styled.div`flex: 1; display: grid; grid-template-columns: 123px 1fr; margin: 3px 5px 0 0; background: #fdfdfd; border-top: 1px solid #d2d5d7;`;
const TreeCol = styled.div`display: flex; flex-direction: column; border-right: 1px solid #e3e5e7; min-width: 0;`;
const TreeHeadCell = styled.div`
  display: flex; flex: none; height: 17px; border-bottom: 1px solid #d2d5d7; color: #333; align-items: center;
  span { overflow: hidden; white-space: nowrap; }
  span:first-child { width: 93px; padding-left: 5px; border-right: 1px solid #e3e5e7; font: bold 9px/16px "Liberation Mono", monospace; }
  span:last-child { padding-left: 5px; }
`;
const TreeList = styled.ul`
  display: grid; grid-template-rows: repeat(24, 1fr); height: 400px; margin: 0; padding: 0; list-style: none;
  font-family: "Liberation Serif", "Noto Sans CJK SC", serif; color: #44474a;
`;
const TreeItem = styled.li`display: flex; align-items: center; gap: 4px; padding-left: ${p => (p.$root ? 0 : 4)}px; white-space: nowrap;`;
const Twist = styled.span`width: 9px; height: 8px; background: ${p => (p.$on ? '#85888a' : 'none')}; clip-path: polygon(0 0, 80% 50%, 0 100%);`;
const Latin = styled.span`font-family: "Liberation Mono", monospace; font-size: 9px;`;
const Mark = styled.i`width: 4px; height: 5px; background: #44474a; margin: 0 -3px 2px 0;`;
const RootValues = styled.div`display: flex; height: 16px; font-family: "Liberation Serif", "Noto Sans CJK SC", serif; white-space: nowrap; align-items: center; span:first-child { width: 92px; padding-left: 1px; }`;
const ScrollBar = styled.div`
  display: flex; align-items: center; height: 14px; margin-top: auto; background: ${p => (p.$flat ? '#fff' : '#dcdee0')}; border: 1px solid #dcdee0;
`;
const ScrollEnd = styled.button`
  flex: none; width: 13px; height: 100%; background: #f5f6f7; display: grid; place-items: center;
  &::before { content: ''; width: 4px; height: 7px; background: #8d9092; clip-path: ${p => (p.$right ? 'polygon(0 0, 100% 50%, 0 100%)' : 'polygon(100% 0, 0 50%, 100% 100%)')}; }
`;
const Thumb = styled.span`flex: ${p => p.$grow} 0 0; height: 100%; ${p => p.$solid && 'background: #f8f8f8; border: 1px solid #b9bcbe;'}`;

const TREE = [
  ['plane', 'SIDE'], ['plane', 'TOP'], ['plane', 'FRONT'], ['csys', 'START_PART'],
  ['extrude', '拉伸 1', 't'], ['extrude', '拉伸 10', 't'], ['extrude', '拉伸 11', 't'], ['extrude', '拉伸 12', 't'], ['extrude', '拉伸 7', 't'],
  ['insert', '在此插入'], ['round', '倒圆角 1', 'm'], ['extrude', '拉伸 2', 'm'], ['extrude', '拉伸 3', 'm'], ['extrude', '拉伸 4', 'm'],
  ['extrude', '拉伸 5', 'm'], ['extrude', '拉伸 6', 'm'], ['chamfer', '倒角 2', 'm'], ['chamfer', '倒角 1', 'm'], ['extrude', '拉伸 9', 'm'],
  ['round', '倒圆角 2', 'm'], ['shell', '壳 1', 'm'], ['extrude', '拉伸 8', 'm'],
];

/* ---------- graphics area ---------- */
const Canvas = styled.section`position: relative; flex: 1; min-width: 0; overflow: hidden; background: linear-gradient(#9c998c, #bebbad 45%, #e3e1d6);`;
const ModelDrawing = styled.svg`position: absolute; left: 500px; top: 70px;`;
const ModeNote = styled.p`position: absolute; left: 8px; top: 646px; margin: 0; font: 7px/16px "Liberation Serif", "Noto Sans CJK SC", serif; color: #222;`;
const ViewBar = styled.div`
  position: absolute; top: 7px; left: 50%; transform: translateX(-50%); display: flex; justify-content: space-between; align-items: center;
  width: 489px; height: 28px; padding: 0 5px 0 6px; background: #f8f8f8; border: 1px solid #d2d5d7;
  button { position: relative; width: 16px; }
`;
const Corner = styled.span`position: absolute; right: -2px; bottom: -2px; border: 2px solid #55585a; border-top-color: transparent; border-left-color: transparent;`;

/* ---------- parameters dialog ---------- */
const Dialog = styled.section`
  position: absolute; right: 0; top: 102px; width: 657px; background: #eef0f2; border: 1px solid #a5a8aa; box-shadow: 0 1px 2px #0004;
`;
const DialogTitle = styled.header`
  display: grid; grid-template-columns: 1fr auto 1fr; align-items: center; height: 28px; padding: 0 5px 2px 9px; background: #d9dddd; border-top: 1px solid #eef0f2;
  h2 { margin: 0; font-size: 11px; font-weight: 500; } div { display: flex; justify-content: flex-end; gap: 3px; }
`;
const MenuBar = styled.nav`display: flex; height: 25px; border-bottom: 1px solid #cfd2d4;`;
const MenuSlot = styled.div`position: relative;`;
const MenuButton = styled.button`width: 40px; height: 24px; color: #2f3235; background: ${p => (p.$on ? '#86d3fa' : 'none')};`;
const Menu = styled.div`
  position: absolute; z-index: 2; top: 24px; left: 0; width: 102px; height: 97px; background: linear-gradient(90deg, #f5f6f7 21px, #e3e5e7 21px, #e3e5e7 22px, #fff 22px); border: 1px solid #b9bcbe;
`;
const MenuItem = styled.button`
  display: block; width: 100%; height: 18px; padding-left: 28px; text-align: left; color: ${p => (p.$dim ? '#acaeb0' : '#44474a')}; background: ${p => (p.$on ? '#cdeefc' : 'none')};
`;
const MenuRule = styled.hr`margin: 2px 2px 2px 24px; border: 0; border-top: 1px solid #dcdee0;`;
const Tooltip = styled.div`
  position: absolute; z-index: 3; left: 219px; top: 79px; width: 127px; padding: 4px 7px; color: #2f3235; background: #fff; border: 1px solid #bfe0ec; white-space: nowrap;
`;
const DialogBody = styled.div`padding: 14px 10px 15px;`;
const Scope = styled.fieldset`
  display: flex; margin: 0; padding: 6px 10px 12px; border: 1px solid #cbced0; min-width: 0; color: #44474a;
  legend { padding: 0 5px; color: #2f3235; font-weight: 500; height: 16px; }
`;
const Combo = styled.div`
  display: flex; ${p => (p.$w ? `width: ${p.$w}px;` : 'flex: 1;')} height: 24px; background: #f7f8f8; border: 1px solid #b5b8ba; color: #55585a;
  select { flex: 1; min-width: 0; appearance: none; border: 0; outline: 0; background: none; padding: 0 6px; }
`;
const ComboArrow = styled.span`display: grid; place-items: center; width: 14px; border-left: 1px solid #b5b8ba; pointer-events: none;`;
const ComboIcon = styled.span`display: grid; place-items: center; padding-left: 6px;`;
const Picker = styled.button`width: 28px; height: 24px; margin: 0 4px 0 0; border: 1px solid #b5b8ba; background: #f7f8f8; display: grid; place-items: center end;`;
const DoubleRule = styled.hr`margin: 12px 0 4px; height: 3px; border: solid #cbced0; border-width: 1px 0;`;
const Panel = styled.div`height: 294px; padding: 3px 8px 0 7px; border: 1px solid #cbced0;`;
const FilterRow = styled.div`display: flex; align-items: center; gap: 4px; height: 24px; label { width: 45px; white-space: nowrap; color: #55585a; } button { margin-left: 4px; }`;
const PushButton = styled.button`
  width: ${p => p.$w || 56}px; height: ${p => (p.$tall ? 26 : 24)}px; display: grid; place-items: center; color: #3c3f42;
  background: ${p => (p.$primary ? '#9fe0ff' : p.$off ? '#e3e4e5' : '#f8f8f8')}; border: 1px solid ${p => (p.$off ? '#d2d5d7' : p.$primary ? '#8ccbe8' : '#b5b8ba')};
`;
const GridRow = styled.div`display: flex; height: 231px; margin-top: 1px;`;
const GridFrame = styled.div`display: flex; flex: 1; min-width: 0; border: 1px solid #b5b8ba; background: #fff;`;
const Gutter = styled.div`flex: none; width: 15px; background: #d6d6d6;`;
const GridMain = styled.div`flex: 1; min-width: 0; display: flex; flex-direction: column; overflow: hidden;`;
const Mover = styled.div`display: flex; flex-direction: column; align-items: center; justify-content: center; gap: 7px; width: 21px; height: 230px;`;
const Table = styled.table`
  width: 590px; flex: none; table-layout: fixed; border-collapse: collapse;
  th, td { padding: 0 3px; border-right: 1px solid #e1e4e5; border-bottom: 1px solid #e1e4e5; text-align: left; white-space: nowrap; overflow: hidden; font-weight: 400; }
  th { height: 22px; padding-left: 9px; color: #2b2d30; font-weight: 500; border-color: #cfd2d4; background: #fafafa; }
  td { height: 24px; color: #85888a; }
  td.strong { color: #1f2123; }
  td.on { background: #b1e1fc; color: #1f2123; }
  td.check { text-align: center; }
`;
const Access = styled.span`display: flex; align-items: center; font-weight: 500;`;
const Check = styled.input`
  appearance: none; display: block; position: relative; width: 12px; height: 12px; margin: 0 auto; border: 1px solid ${p => (p.disabled ? '#c5c8ca' : '#85888a')}; background: #fff;
  &:checked::after { content: ''; position: absolute; left: 3px; top: 0; width: 4px; height: 8px; border: solid ${p => (p.disabled ? '#c5c8ca' : '#333')}; border-width: 0 2px 2px 0; transform: rotate(40deg); }
`;
const GridActions = styled.div`display: flex; align-items: center; gap: 4px;`;
const Spacer = styled.span`flex: 1;`;
const DialogFoot = styled.footer`display: flex; gap: 7px; padding: 9px 9px 9px; border-top: 1px solid #cbced0;`;
const Annotations = styled.svg`position: absolute; z-index: 4; left: 0; top: 0; pointer-events: none;`;

const COLUMNS = [['名称', 65], ['类型', 66], ['值', 66], ['指定', 65], ['访问', 66], ['源', 66], ['说明', 65], ['受限制的', 66], ['单位数量', 65]];
const ROWS = [
  ['材料', '字符串', 'ABS', true, '', false],
  ['密度', '实数', '7.850000', true, '', false],
  ['备注', '字符串', '', true, '', false],
  ['PTC_MATER', '字符串', 'ABS', false, '', 'locked'],
  ['CNAME', '字符串', '', false, '产品名称', false],
];

/* ---------- status ---------- */
const Status = styled.footer`position: relative; display: flex; height: 53px; background: #eceef0; border-top: 2px solid #9a9c9e;`;
const StatusTools = styled.div`display: flex; align-items: flex-end; gap: 6px; width: 71px; height: 51px; overflow: hidden;`;
const StatusToggle = styled.button`width: 15px; height: 18px; overflow: hidden; background: #dcdee0; border: solid #b5b8ba; border-width: 1px 1px 0 0;`;
const Rule = styled.i`align-self: flex-end; width: 1px; height: 25px; background: #b9bcbe;`;
const Messages = styled.ul`
  flex: 1; margin: 0; padding: 7px 0 0 6px; list-style: none; font-size: 10px; line-height: 15px;
  li { display: flex; align-items: center; gap: 5px; } li::before { content: ''; width: 4px; height: 4px; border-radius: 2px; background: #165f85; }
`;
const StatusRight = styled.div`display: flex; align-items: flex-end; width: 351px; padding-right: 16px;`;
const FindButton = styled.button`display: flex; align-items: center; width: 40px; height: 23px; margin: 0 1px 0 2px; padding-left: 5px; background: #f8f8f8; border: 1px solid #d2d5d7; ${Arrow} { margin-left: 7px; }`;
const StatusGap = styled.span`width: 90px;`;

const Watermark = styled.div`position: absolute; right: 21px; bottom: 8px; width: 168px; height: 80px; pointer-events: none; svg { position: absolute; left: 62px; top: 0; }`;
const Brand = styled.div`
  display: flex; justify-content: space-between; padding-top: 15px; font: italic 300 39px/48px "Noto Sans CJK SC", sans-serif; color: #111;
  span:nth-child(-n+2) { color: #f4683c; }
`;
const Site = styled.div`font: italic 16px/18px Inter, sans-serif; color: #8b8d90; white-space: nowrap;`;

function Select({ value, w, label, id }) {
  return (
    <Combo $w={w}>
      <select id={id} aria-label={label} defaultValue={value}><option>{value}</option></select>
      <ComboArrow><Arrow /></ComboArrow>
    </Combo>
  );
}

function RibbonBar() {
  return (
    <Ribbon>
      {GROUPS.map(g => (
        <Group key={g.label} $w={g.w}>
          <GroupBody>
            {g.cols.map((c, i) => c.big ? (
              <BigButton key={i} $w={c.w} $ml={c.ml}><BigIcon n={c.big} /><span>{c.text}</span>{c.arrow && <Arrow />}</BigButton>
            ) : (
              <Column key={i} $w={c.w} $ml={c.ml}>
                {c.items.map(([icon, text, f]) => (
                  <Command key={text} $dim={f.includes('d')}><Icon n={icon} />{text}{f.includes('a') && <Arrow $dim={f.includes('d') && !f.includes('s')} />}</Command>
                ))}
              </Column>
            ))}
          </GroupBody>
          <GroupLabel>{g.label}{g.arrow && <Arrow />}</GroupLabel>
        </Group>
      ))}
      <LabelFill />
    </Ribbon>
  );
}

const QUICK = ['page', 'ball', 'session', '>', 'folder', 'save', 'copyFolder', 'undo', '>', 'redo', '>', 'regen', 'saveCopy', 'sheetEdit', 'monitor', 'windows', '>', 'closeDoc', '|', '>'];
const TABS = [['文件', 63, 'file'], ['模型', 66, 'on'], ['WJT276工具箱', 130], ['WJT276-Ⅱ', 110], ['分析', 65], ['实时仿真', 92], ['注释', 65], ['工具', 65], ['视图', 64], ['柔性建模', 93], ['应用程序', 92]];
const VIEW = ['fit', 'zoomIn', 'zoomOut', 'repaint', 'shade', 'cubeDark', 'cubeList', 'camera', 'section', 'explode', 'persp', 'datumAll', 'planeEye', 'axisEye', 'ptsEye', 'csysEye', 'annoEye', 'spin', 'tri', 'flag'];

function ModelTree() {
  return (
    <Side>
      <SideTabs>
        <SideTab $w={59} $pl={0} $on><Icon n="modelTree" s={14} />模型树</SideTab>
        <SideTab $w={104} $pl={8}><Icon n="folders" s={17} />文件夹浏览器</SideTab>
        <SideTab $w={70} $pl={8}><Icon n="fav" />收藏夹</SideTab>
      </SideTabs>
      <SideHead><h2>模型树</h2><Icon n="tools" /><Arrow /><Icon n="listDoc" /><Arrow /><Icon n="treeHide" s={18} /></SideHead>
      <SearchRow>
        <Icon n="filter" s={15} />
        <SearchBox><input aria-label="模型树" /><button>×</button></SearchBox>
        <Arrow /><Icon n="plusDim" s={11} />
      </SearchRow>
      <TreeFrame>
        <TreeCol>
          <TreeHeadCell />
          <TreeList>
            <TreeItem $root><Icon n="cube" s={13} /><Latin>1002-AB543.PRT</Latin></TreeItem>
            <TreeItem><Twist $on /><Icon n="material" />材料</TreeItem>
            {TREE.map(([icon, text, f]) => (
              <TreeItem key={text}>
                <Twist $on={f === 't'} /><Icon n={icon} />{f === 'm' && <Mark />}
                {/^[A-Z]/.test(text) ? <Latin>{text}</Latin> : <span>{text}</span>}
              </TreeItem>
            ))}
          </TreeList>
          <ScrollBar $flat><ScrollEnd /><Thumb $grow={1} /><ScrollEnd $right /></ScrollBar>
        </TreeCol>
        <TreeCol>
          <TreeHeadCell><span>ptc_common_name</span><span>材料</span></TreeHeadCell>
          <RootValues><span>1002滑块支架</span><Latin>ABS</Latin></RootValues>
          <ScrollBar><ScrollEnd /><Thumb $grow={1} $solid /><Thumb $grow={3} /><ScrollEnd $right /></ScrollBar>
        </TreeCol>
      </TreeFrame>
    </Side>
  );
}

const LIGHT = '#aebbce', FRONT = '#5f6770', WALL = '#575d68';
const FACES = [
  [WALL, '1230,240 1255,290 1212,765 1207,811 1186,752'],
  [FRONT, '767,765 962,760 982,804 1042,802 1022,756 1186,752 1207,811 792,825'],
  [LIGHT, '814,254 974,249 950,504 986,503 962,760 767,765'],
  [LIGHT, '1034,246 1230,240 1186,752 1022,756 1046,501 1010,503'],
  [WALL, '974,249 994,295 984,406 982,407 976,470 962,471 958,504 950,504'],
  [LIGHT, '994,295 1030,294 1019,406 984,406'],
  [FRONT, '982,407 1019,406 1017,420 980,421'],
  [LIGHT, '962,471 1013,470 1010,503 1016,517 1045,516 1040,564 988,565 993,516 986,503 958,504'],
  [FRONT, '1010,503 1046,501 1045,516 1016,517'],
  [WALL, '986,503 993,516 988,565 982,612 978,660 992,692 982,804 962,760'],
  [FRONT, '987,565 1040,564 1035,611 982,612'],
  [LIGHT, '992,692 1028,692 1022,756 1042,802 982,804'],
];

function Model() {
  return (
    <ModelDrawing width="520" height="610" viewBox="757 230 520 610" aria-hidden="true">
      {FACES.map(([f, pts], i) => <polygon key={i} points={pts} fill={f} stroke="#22262c" strokeLinejoin="round" />)}
      <path d="M1013 470L1017 420M1028 692L1035 611" stroke="#22262c" />
    </ModelDrawing>
  );
}

function ParametersDialog() {
  return (
    <Dialog aria-label="参数">
      <DialogTitle><span /><h2>参数</h2><div><Icon n="dlgMin" /><Icon n="dlgMax" /><Icon n="dlgClose" /></div></DialogTitle>
      <MenuBar>
        {['文件', '编辑', '参数', '工具'].map(m => <MenuButton key={m}>{m}</MenuButton>)}
        <MenuSlot>
          <MenuButton $on>显示</MenuButton>
          <Menu>
            <MenuItem $on>使用位置</MenuItem><MenuItem>驱动源</MenuItem><MenuItem>驱动. . .</MenuItem><MenuItem $dim>限制表. . .</MenuItem>
            <MenuRule /><MenuItem>信息. . .</MenuItem>
          </Menu>
        </MenuSlot>
      </MenuBar>
      <Tooltip role="tooltip">显示全局参数的信息。</Tooltip>
      <DialogBody>
        <Scope>
          <legend>查找范围</legend>
          <Select value="零件" w={231} label="类型" />
          <Picker aria-label="选择"><Icon n="picker" /></Picker>
          <Combo><ComboIcon><Icon n="cube" s={12} /></ComboIcon><select aria-label="模型" defaultValue="m"><option value="m">1002-AB543</option></select><ComboArrow><Arrow /></ComboArrow></Combo>
        </Scope>
        <DoubleRule />
        <Panel>
          <FilterRow>
            <label htmlFor="filter">过滤依据</label>
            <Select id="filter" value="默认" />
            <PushButton $w={61}>自定义...</PushButton>
          </FilterRow>
          <GridRow>
            <GridFrame>
              <Gutter />
              <GridMain>
                <Table>
                  <colgroup>{COLUMNS.map(([c, w]) => <col key={c} width={w} />)}</colgroup>
                  <thead><tr>{COLUMNS.map(([c]) => <th key={c}>{c}</th>)}</tr></thead>
                  <tbody>
                    {ROWS.map(([name, type, value, given, note, limit], i) => (
                      <tr key={name}>
                        <td className={i === 1 ? 'on' : ''}>{name}</td><td>{type}</td><td className="strong">{value}</td>
                        <td className="check"><Check type="checkbox" aria-label={`${name} 指定`} defaultChecked={given} /></td>
                        <td className="strong"><Access><Icon n="locks" s={18} />完整</Access></td>
                        <td>用户定义的</td><td className="strong">{note}</td>
                        <td className="check"><Check type="checkbox" aria-label={`${name} 受限制的`} defaultChecked={!!limit} disabled={!!limit} /></td><td />
                      </tr>
                    ))}
                  </tbody>
                </Table>
                <ScrollBar><ScrollEnd /><Thumb $grow={486} $solid /><Thumb $grow={66} /><ScrollEnd $right /></ScrollBar>
              </GridMain>
            </GridFrame>
            <Mover><Icon n="up" /><Icon n="down" /></Mover>
          </GridRow>
          <GridActions>
            <PushButton $w={26} $tall aria-label="添加"><Icon n="plus" /></PushButton>
            <PushButton $w={26} $tall $off aria-label="移除"><Icon n="minus" /></PushButton>
            <Spacer />
            <Select value="主过滤器" w={188} label="过滤器" />
            <PushButton $w={50}>属性...</PushButton>
            <PushButton $w={26} $tall aria-label="列"><Icon n="colTable" /></PushButton>
            <PushButton $w={26} $tall aria-label="查找"><Icon n="binoc" s={18} /></PushButton>
          </GridActions>
        </Panel>
      </DialogBody>
      <DialogFoot><PushButton>重置</PushButton><Spacer /><PushButton $primary>确定</PushButton><PushButton>取消</PushButton></DialogFoot>
      <Annotations width="300" height="270" viewBox="1108 263 300 270" fill="none" stroke="#e0281f" strokeWidth="3" strokeLinecap="round" strokeLinejoin="round" aria-hidden="true">
        <path d="M1322 290L1306 290L1305 302Q1320 300 1319 309Q1316 317 1303 317Q1296 317 1295 314" />
        <path d="M1384 309Q1370 313 1366 325Q1365 330 1372 329Q1381 328 1381 321Q1377 319 1368 325" />
        <path d="M1186 485Q1183 497 1178 502Q1190 505 1202 502M1193 489Q1191 503 1187 513" />
      </Annotations>
    </Dialog>
  );
}

export default function App() {
  return (
    <Shell>
      <Global />
      <svg width="0" height="0" style={{ position: 'absolute' }} aria-hidden="true">
        <defs><radialGradient id="ball" cx="0.650" cy="0.300" r="0.700"><stop offset="0" stopColor="#f5f5f5" /><stop offset="0.400" stopColor="#8f8f8f" /><stop offset="1" stopColor="#303030" /></radialGradient></defs>
      </svg>
      <TitleBar>
        <QuickBar>
          <QuickButton $app aria-label="Creo"><Icon n="cube" /></QuickButton><QuickRule $first />
          {QUICK.map((q, i) => q === '>' ? <QuickButton key={i} $arrow aria-label="更多"><Arrow /></QuickButton> : q === '|' ? <QuickRule key={i} /> : <QuickButton key={i} aria-label={q}><Icon n={q} /></QuickButton>)}
        </QuickBar>
        <WindowTitle>1002-AB543 (活动的) E:\YT-WORK\OEM\PHILIPS\1002\1002-ab543.prt.10 - Creo Parametric 5.0</WindowTitle>
        <WindowButtons><Icon n="winMin" /><Icon n="winRestore" /><Icon n="winClose" /></WindowButtons>
      </TitleBar>
      <TabBar>
        {TABS.map(([t, w, k]) => <Tab key={t} $w={w} $kind={k}>{t}</Tab>)}
        <TabTools><Icon n="collapse" s={14} /><Icon n="search" s={15} /><Icon n="learn" /><Arrow /><Icon n="help" /></TabTools>
      </TabBar>
      <RibbonBar />
      <Main>
        <ModelTree />
        <Canvas>
          <Model />
          <ModeNote>插入模式</ModeNote>
          <ViewBar>
            {VIEW.map((v, i) => <button key={v} aria-label={v}><Icon n={v} />{[4, 5, 6, 11].includes(i) && <Corner />}</button>)}
          </ViewBar>
          <ParametersDialog />
        </Canvas>
      </Main>
      <Status>
        <StatusTools><StatusToggle aria-label="模型树"><Icon n="modelTree" s={14} /></StatusToggle><button aria-label="浏览器"><Icon n="globe" /></button><button aria-label="全屏"><Icon n="square" /></button></StatusTools>
        <Rule />
        <Messages><li>所有没有显示的对象已被拭除。</li><li>基本窗口不能关闭。</li></Messages>
        <StatusRight><Rule /><Spacer /><Rule /><FindButton aria-label="查找"><Icon n="binoc" /><Arrow /></FindButton><Rule /><StatusGap /><Select value="几何" w={163} label="选择过滤器" /></StatusRight>
      </Status>
      <Watermark>
        <Brand><span>野</span><span>火</span><span>论</span><span>坛</span></Brand>
        <svg width="24" height="44" viewBox="0 0 24 44" aria-hidden="true"><path d="M8 0Q30 22 10 43Q2 44 1 38Q14 28 4 10Q11 18 11 24Q16 14 8 0z" fill="#f4683c" /></svg>
        <Site>www.proewildfire.cn</Site>
      </Watermark>
    </Shell>
  );
}
